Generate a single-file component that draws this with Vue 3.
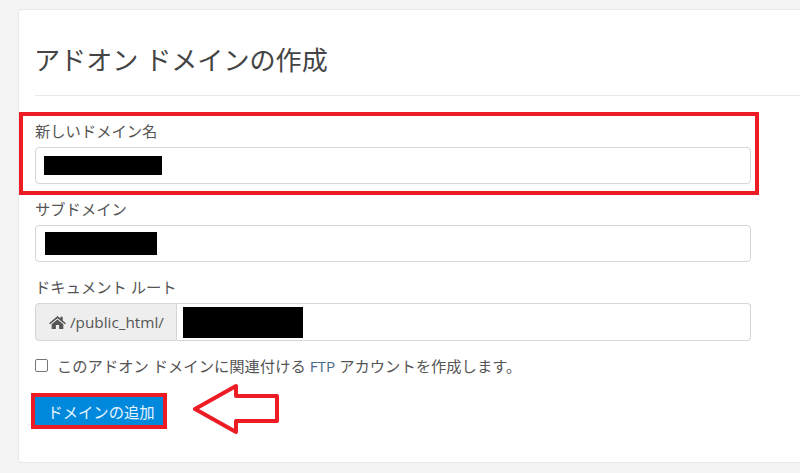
<template>
  <div class="page">
    <div class="card">
      <h1 class="title">アドオン ドメインの作成</h1>
      <hr class="divider" />

      <div class="field field-first">
        <label class="label">新しいドメイン名</label>
        <div class="input">
          <span class="redact redact-domain"></span>
        </div>
        <!-- red annotation box -->
        <span class="highlight"></span>
      </div>

      <div class="field field-sub">
        <label class="label">サブドメイン</label>
        <div class="input">
          <span class="redact redact-sub"></span>
        </div>
      </div>

      <div class="field field-root">
        <label class="label">ドキュメント ルート</label>
        <div class="input-group">
          <div class="addon">
            <svg class="home" viewBox="0 0 26 20" width="17" height="13">
              <path d="M13 0 L17.5 3.8 V1 H21 V6.8 L26 11 L24.4 12.8 L13 3.4 L1.6 12.8 L0 11 Z" fill="#555" />
              <path d="M13 5.2 L22 12.6 V20 H15.5 V14 H10.5 V20 H4 V12.6 Z" fill="#555" />
            </svg>
            <span>/public_html/</span>
          </div>
          <div class="input input-joined">
            <span class="redact redact-root"></span>
          </div>
        </div>
      </div>

      <label class="check-row">
        <input type="checkbox" class="check" />
        <span>このアドオン ドメインに関連付ける <span class="ftp">FTP</span> アカウントを作成します。</span>
      </label>

      <div class="actions">
        <button class="btn" type="button">ドメインの追加</button>
        <svg class="arrow" width="90" height="56" viewBox="0 0 90 56">
          <path d="M3 26 L44 3 V13 H85 V38 H44 V49 Z" fill="#fff" stroke="#ed1c24" stroke-width="4" stroke-linejoin="round" />
        </svg>
      </div>
    </div>
  </div>
</template>

<script setup>
</script>

<style>
html,
body {
  margin: 0;
  background: #f3f3f3;
}
</style>

<style scoped>
.page {
  height: 473px;
  overflow: hidden;
  padding: 9px 0 0 18px;
  box-sizing: border-box;
  font-family: "Open Sans", "Noto Sans CJK JP", sans-serif;
  color: #555;
  font-size: 15.3px;
}

.card {
  width: 800px;
  height: 454px;
  box-sizing: border-box;
  background: #fff;
  border: 1px solid #e6eaea;
  border-radius: 4px;
  padding: 0 0 0 16px;
}

.title {
  margin: 31px 0 0 -1px;
  font-size: 26.1px;
  font-weight: 400;
  line-height: 38px;
  color: #444;
}

.divider {
  border: 0;
  border-top: 1px solid #e6eaea;
  margin: 16px 0 0;
}

.field {
  width: 716px;
  position: relative;
}

.field-first {
  margin-top: 25px;
}

.field-sub {
  margin-top: 15px;
}

.field-root {
  margin-top: 15px;
}

.label {
  display: block;
  font-size: 15.3px;
  line-height: 20px;
  margin-bottom: 6px;
  color: #555;
}

.input {
  height: 37px;
  box-sizing: border-box;
  border: 1px solid #d6d6d6;
  border-radius: 4px;
  background: #fff;
  display: flex;
  align-items: center;
  padding-left: 8px;
}

.redact {
  display: block;
  background: #000;
}

.redact-domain {
  width: 118px;
  height: 19px;
}

.redact-sub {
  width: 112px;
  height: 23px;
  margin-left: 1px;
}

.redact-root {
  width: 120px;
  height: 31px;
  margin-left: -2px;
}

.highlight {
  position: absolute;
  left: -16px;
  top: -9px;
  width: 740px;
  height: 83px;
  box-sizing: border-box;
  border: 4px solid #ed1c24;
  pointer-events: none;
}

.input-group {
  display: flex;
  height: 38px;
}

.addon {
  display: flex;
  align-items: center;
  gap: 4px;
  width: 142px;
  box-sizing: border-box;
  padding-left: 13px;
  background: #eee;
  border: 1px solid #d6d6d6;
  border-radius: 4px 0 0 4px;
  color: #555;
  font-size: 15.3px;
}

.input-joined {
  flex: 1;
  height: 38px;
  border-left: 0;
  border-radius: 0 4px 4px 0;
}

.check-row {
  display: flex;
  align-items: center;
  gap: 9px;
  margin-top: 14px;
  height: 20px;
  font-size: 15.3px;
}

.check {
  appearance: none;
  width: 13px;
  height: 13px;
  margin: 0;
  border: 1px solid #767676;
  border-radius: 2px;
  background: #fff;
}

.ftp {
  color: #4a6b8a;
}

.actions {
  position: relative;
  margin-top: 18px;
  margin-left: -4px;
}

.btn {
  display: block;
  width: 136px;
  height: 36px;
  box-sizing: border-box;
  border: 4px solid #ed1c24;
  background: #0088dc;
  color: #e6f5ff;
  font-family: inherit;
  font-size: 15.3px;
  padding: 0 0 0 4px;
}

.arrow {
  position: absolute;
  left: 161px;
  top: -10px;
}
</style>
